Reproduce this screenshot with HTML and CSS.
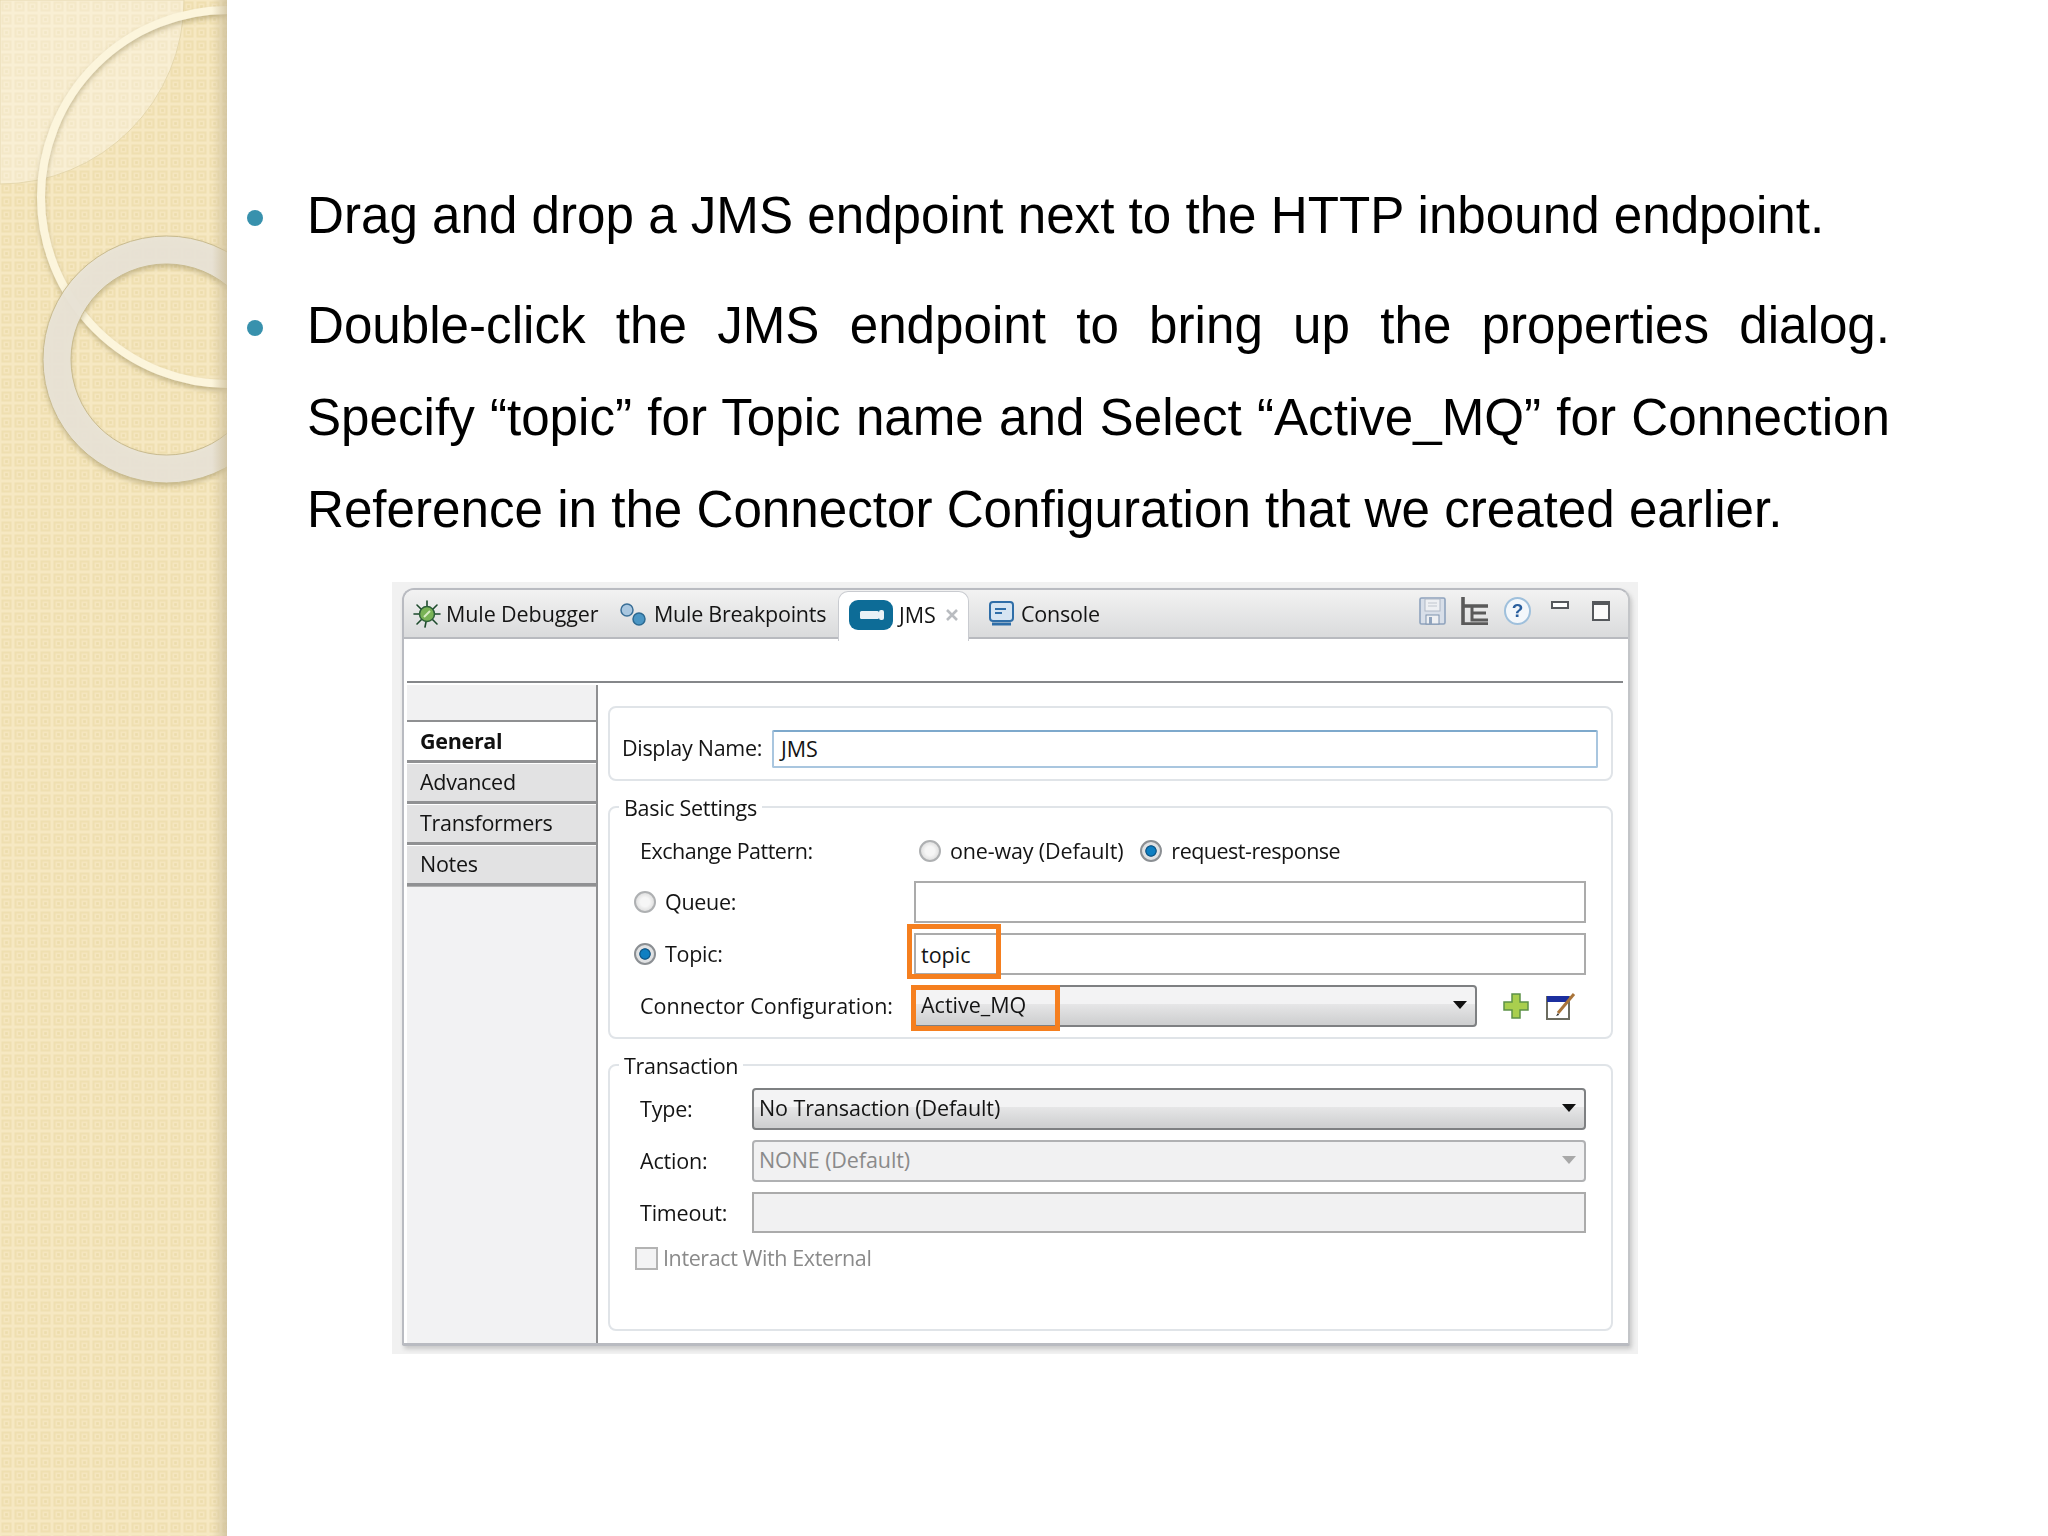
FILE: index.html
```html
<!DOCTYPE html>
<html lang="en">
<head>
<meta charset="utf-8">
<title>JMS endpoint</title>
<link rel="stylesheet" href="styles.css">
</head>
<body>
<div class="slide">
  <aside class="decor">
    <svg width="227" height="1536" viewBox="0 0 227 1536">
      <defs>
        <pattern id="tile" width="13" height="13" patternUnits="userSpaceOnUse">
          <rect width="13" height="13" fill="#f6e8c2"/>
          <rect x="1.5" y="1.5" width="10" height="10" fill="#efdfb0"/>
          <rect x="3.5" y="3.5" width="6" height="6" fill="#f5e6bf"/>
          <rect x="5.2" y="5.2" width="2.6" height="2.6" fill="#ecdcab"/>
        </pattern>
        <linearGradient id="edge" x1="0" x2="1" y1="0" y2="0">
          <stop offset="0" stop-color="#cbbd9a" stop-opacity="0"/>
          <stop offset="1" stop-color="#cbbd9a" stop-opacity=".75"/>
        </linearGradient>
        <filter id="soft" x="-20%" y="-20%" width="140%" height="140%">
          <feDropShadow dx="0" dy="3" stdDeviation="2.5" flood-color="#8a7a4c" flood-opacity=".45"/>
        </filter>
      </defs>
      <rect width="227" height="1536" fill="url(#tile)"/>
      <path d="M0 0H184A184 184 0 0 1 0 184Z" fill="#fff" fill-opacity=".3" stroke="#e6d8ae" stroke-width="1"/>
      <circle cx="228" cy="197" r="187" fill="none" stroke="#fcf5dc" stroke-width="8" filter="url(#soft)"/>
      <circle cx="166.500" cy="359.500" r="109.500" fill="none" stroke="#e9e4d7" stroke-opacity=".93" stroke-width="28" filter="url(#soft)"/>
      <circle cx="166.500" cy="359.500" r="123.500" fill="none" stroke="#c9bb8e" stroke-width="1"/>
      <circle cx="166.500" cy="359.500" r="95.500" fill="none" stroke="#c9bb8e" stroke-width="1"/>
      <rect x="212" width="15" height="1536" fill="url(#edge)"/>
    </svg>
  </aside>

  <main class="content">
    <ul class="points">
      <li class="point"><span class="dot"></span><p class="point-text">Drag and drop a JMS endpoint next to the HTTP inbound endpoint.</p></li>
      <li class="point"><span class="dot"></span><p class="point-text">Double-click the JMS endpoint to bring up the properties dialog. Specify “topic” for Topic name and Select “Active_MQ” for Connection Reference in the Connector Configuration that we created earlier.</p></li>
    </ul>

    <div class="frame">
      <section class="panel">
        <header class="tabbar">
          <div class="tab tab-debug">
            <svg class="ico" width="28" height="30" viewBox="0 0 28 30"><g stroke="#1d4a2c" stroke-width="1.600" stroke-linecap="round"><path d="M14 2v6M4 6l5 5M24 6l-5 5M1 15h6M27 15h-6M4 25l5-5M24 25l-5-5M12 28l1-5"/></g><circle cx="14" cy="15" r="7.500" fill="#79b356" stroke="#2d5f38" stroke-width="1.500"/><path d="M11 18l6-6" stroke="#d8edc4" stroke-width="2"/></svg>
            <span>Mule Debugger</span>
          </div>
          <div class="tab tab-break">
            <svg class="ico" width="30" height="28" viewBox="0 0 30 28"><circle cx="9" cy="10" r="6" fill="#a9c7e0" stroke="#3a6f97" stroke-width="1.500"/><circle cx="21" cy="19" r="6" fill="#4b96c4" stroke="#2d6a92" stroke-width="1.500"/></svg>
            <span>Mule Breakpoints</span>
          </div>
          <div class="tab tab-active">
            <svg class="ico" width="44" height="30" viewBox="0 0 44 30"><rect width="44" height="30" rx="9" fill="#0d6c97"/><rect x="11" y="11" width="19" height="8" rx="1.500" fill="#e8f2f6"/><rect x="30" y="10" width="5" height="10" rx="2" fill="#e8f2f6"/></svg>
            <span>JMS</span>
            <svg class="close" width="14" height="14" viewBox="0 0 14 14"><path d="M2 2l10 10M12 2L2 12" stroke="#b9bcc0" stroke-width="2.600"/></svg>
          </div>
          <div class="tab tab-console">
            <svg class="ico" width="25" height="25" viewBox="0 0 25 25"><rect x="1" y="1" width="23" height="19" rx="3" fill="#d6e5f2" stroke="#2f6ea8" stroke-width="2"/><path d="M6 8h11M6 12h7" stroke="#2f6ea8" stroke-width="2"/><path d="M3 23h19" stroke="#2f6ea8" stroke-width="3"/></svg>
            <span>Console</span>
          </div>
          <div class="tools">
            <svg class="save" width="27" height="28" viewBox="0 0 27 28"><rect x="1" y="1" width="25" height="26" rx="1.500" fill="#d8dfe9" stroke="#8fa3bd" stroke-width="1.600"/><rect x="6" y="2" width="15" height="12" fill="#eef0f3" stroke="#aeb8c6"/><path d="M9 6h9M9 9h9" stroke="#c0c6ce"/><rect x="7" y="18" width="13" height="9" fill="#eef0f3" stroke="#7f93ae"/><rect x="10" y="20" width="3" height="7" fill="#8fa3bd"/></svg>
            <svg width="27" height="28" viewBox="0 0 27 28"><path d="M2 0v27h25M2 9h25" fill="none" stroke="#5a5a5a" stroke-width="3.600"/><path d="M11 9v14h16M11 16h14" fill="none" stroke="#5a5a5a" stroke-width="3"/></svg>
            <span class="help">?</span>
            <span class="min"></span>
            <span class="max"></span>
          </div>
        </header>
        <div class="toolstrip"></div>

        <div class="body">
          <nav class="side">
            <div class="side-blank"></div>
            <div class="side-item side-on">General</div>
            <div class="side-item">Advanced</div>
            <div class="side-item">Transformers</div>
            <div class="side-item">Notes</div>
            <div class="side-fill"></div>
          </nav>

          <div class="forms">
            <div class="group group-name">
              <label class="name-label">Display Name:</label>
              <div class="field field-focus">JMS</div>
            </div>

            <div class="group group-basic">
              <div class="legend">Basic Settings</div>
              <div class="row">
                <div class="cell-label indent tight">Exchange Pattern:</div>
                <div class="choices">
                  <span class="radio"></span><span class="choice-text">one-way (Default)</span>
                  <span class="radio radio-on"></span><span class="choice-text tight">request-response</span>
                </div>
              </div>
              <div class="row row-next">
                <div class="cell-label radio-label"><span class="radio"></span>Queue:</div>
                <div class="field field-wide"></div>
              </div>
              <div class="row row-next">
                <div class="cell-label radio-label"><span class="radio radio-on"></span>Topic:</div>
                <div class="field field-wide">topic<span class="mark mark-topic"></span></div>
              </div>
              <div class="row row-next">
                <div class="cell-label indent loose">Connector Configuration:</div>
                <div class="combo combo-conn">Active_MQ<span class="arrow"></span><span class="mark mark-conn"></span></div>
                <svg class="add" width="26" height="26" viewBox="0 0 26 26"><path d="M9 1h8v8h8v8h-8v8H9v-8H1V9h8Z" fill="#a9cf4e" stroke="#5d9248" stroke-width="1.500"/></svg>
                <svg class="edit" width="30" height="30" viewBox="0 0 30 30"><rect x="1" y="6" width="22" height="22" fill="#fff" stroke="#6c6c60" stroke-width="2"/><rect x="1" y="5" width="22" height="6" fill="#1c2f9f"/><path d="M12 22L28 3" stroke="#a9743a" stroke-width="3"/><path d="M12 22l-2 3 3-1z" fill="#222"/></svg>
              </div>
            </div>

            <div class="group group-trans">
              <div class="legend">Transaction</div>
              <div class="trow">
                <div class="tlabel">Type:</div>
                <div class="combo combo-wide">No Transaction (Default)<span class="arrow"></span></div>
              </div>
              <div class="trow">
                <div class="tlabel">Action:</div>
                <div class="combo combo-wide combo-off">NONE (Default)<span class="arrow arrow-off"></span></div>
              </div>
              <div class="trow">
                <div class="tlabel">Timeout:</div>
                <div class="field field-off"></div>
              </div>
              <div class="check-row"><span class="check"></span>Interact With External</div>
            </div>
          </div>
        </div>
      </section>
    </div>
  </main>
</div>
</body>
</html>
```

FILE: styles.css
```css
* { box-sizing: border-box; }
html, body { margin: 0; padding: 0; background: #fff; }
.slide { display: flex; width: 2048px; height: 1536px; overflow: hidden; background: #fff; }
.decor { flex: 0 0 227px; height: 1536px; }
.decor svg { display: block; }
.content { flex: 1; padding-top: 170px; min-width: 0; }

.points { list-style: none; margin: 0; padding: 0; }
.point { display: flex; margin-bottom: 18px; }
.dot { flex: 0 0 16px; height: 16px; margin: 40px 44px 0 20px; border-radius: 50%; background: #3891ad; }
.point-text { margin: 0; width: 1583px; font: 51.150px/92px "Liberation Sans", Arial, sans-serif; color: #000; text-align: justify; }

.frame { margin: 26px 0 0 165px; width: 1246px; height: 772px; padding: 6px 8px 8px 10px; background: #f1f1f1; }
.panel { height: 758px; background: #fff; border: 2px solid #b9bbc1; border-bottom-width: 3px; border-radius: 12px 12px 2px 2px; border-right-color: #c3c5c8; box-shadow: 2px 3px 4px #c8c8c8; font: 21.500px/30px "Open Sans", "Noto Sans", sans-serif; color: #141414; display: flex; flex-direction: column; overflow: hidden; filter: blur(.35px); }

.tabbar { height: 49px; flex: none; display: flex; align-items: stretch; background: linear-gradient(#f2f2f2, #dadbdc); border-bottom: 2px solid #b8babf; }
.tab { display: flex; align-items: center; white-space: nowrap; letter-spacing: -.1px; }
.tab-debug { padding-left: 9px; width: 214px; gap: 5px; }
.tab-break { width: 220px; gap: 6px; letter-spacing: -.25px; }
.tab-active { width: 131px; padding: 0 0 3px 10px; gap: 6px; height: 50px; background: #fff; border-radius: 10px 10px 0 0; border: 1px solid #c9cbd0; border-bottom: none; margin-top: 1px; }
.close { margin-left: 3px; }
.tab-console { padding-left: 20px; gap: 7px; letter-spacing: -.2px; }
.tools { margin-left: auto; display: flex; align-items: center; padding: 0 18px 6px 0; gap: 16px; }
.save { margin-right: -1px; }
.help { width: 27px; height: 28px; border-radius: 50%; border: 2px solid #9fc0dc; background: #f3f7fb; color: #2a5f9e; font: bold 19px/24px "Liberation Sans", sans-serif; text-align: center; }
.min { width: 18px; height: 8px; margin: 0 7px 12px 4px; border: 2px solid #55585c; background: #fff; }
.max { width: 18px; height: 20px; border: 2px solid #55585c; border-top-width: 4px; background: #fbfbfb; }

.toolstrip { height: 44px; flex: none; margin: 0 5px 2px 3px; border-bottom: 2px solid #85878a; }
.body { flex: 1; display: flex; padding: 0 0 0 3px; min-height: 0; }

.side { flex: 0 0 191px; display: flex; flex-direction: column; border-right: 2px solid #8f9092; }
.side-blank { height: 37px; background: #f1f1f2; border-bottom: 2px solid #8f9092; flex: none; }
.side-item { flex: none; height: 41px; padding: 0 13px; line-height: 35px; background: #e2e2e3; border-bottom: 3px solid #909193; border-top: 1px solid #fff; letter-spacing: -.3px; }
.side-on { background: #fff; font-weight: 700; color: #111; }
.side-fill { flex: 1; background: #f2f2f3; border-top: 1px solid #b0b0b0; }

.forms { flex: none; width: 1005px; margin-left: 10px; padding-top: 21px; }
.group { border: 2px solid #e0e4e8; border-radius: 8px; }
.group-name { height: 75px; display: flex; align-items: flex-start; padding: 22px 0 0 12px; margin-bottom: 25px; }
.name-label { width: 150px; flex: none; letter-spacing: -.3px; padding-top: 3px; }
.group-basic { height: 233px; padding-top: 22px; margin-bottom: 25px; }
.group-trans { height: 267px; padding-top: 22px; }
.legend { width: fit-content; height: 30px; margin: -37px 0 7px 9px; padding: 0 5px; background: #fff; letter-spacing: -.3px; }

.field { height: 42px; border: 2px solid #ababab; background: #fff; padding: 0 5px; line-height: 40px; position: relative; }
.field-focus { width: 826px; height: 38px; line-height: 34px; padding: 0 7px; border-color: #a9c6df; border-top-color: #7ea9cc; border-radius: 2px; }
.field-wide { width: 672px; }
.field-off { width: 834px; height: 41px; background: #f1f1f2; }

.row { display: flex; align-items: center; height: 42px; }
.row-next { margin-top: 9px; }
.row-next + .row-next { margin-top: 10px; }
.cell-label { flex: 0 0 304px; white-space: nowrap; letter-spacing: -.3px; }
.indent { padding-left: 30px; }
.radio-label { display: flex; align-items: center; gap: 9px; padding-left: 24px; }
.choices { display: flex; align-items: center; padding-left: 5px; letter-spacing: -.15px; }
.choice-text { margin: 0 17px 0 9px; }
.tight { letter-spacing: -.5px; }
.loose { letter-spacing: 0; }

.radio { flex: none; width: 22px; height: 22px; border-radius: 50%; border: 2px solid #aeb0b2; background: radial-gradient(circle, #f6f6f6 35%, #cfcfcf 100%); }
.radio-on { border-color: #8b8f93; background: radial-gradient(circle, #0f7fc2 0 30%, #0b4f7e 42%, #e2e4e6 48%, #d8d8d8 100%); }

.combo { position: relative; height: 42px; padding: 0 5px; line-height: 36px; border: 2px solid #7e8082; border-radius: 4px; background: linear-gradient(#f3f3f4 0 45%, #e6e6e7 45%, #cfd0d1 95%); }
.combo-conn { width: 564px; margin-left: -1px; padding-left: 6px; }
.combo-wide { width: 834px; letter-spacing: -.1px; }
.combo-off { background: #f1f1f2; color: #8a8a8a; border-color: #b0b1b3; }
.arrow { position: absolute; right: 8px; top: 14px; width: 0; height: 0; border: 7px solid transparent; border-top: 8px solid #111; border-bottom: none; }
.arrow-off { border-top-color: #a8a8a8; }
.add { margin-left: 26px; flex: none; }
.edit { margin-left: 17px; flex: none; }

.mark { position: absolute; border: 5px solid #f57f1f; pointer-events: none; }
.mark-topic { left: -9px; top: -11px; width: 94px; height: 55px; }
.mark-conn { left: -4px; top: -2px; width: 149px; height: 46px; }

.trow { display: flex; align-items: center; height: 41px; margin-bottom: 11px; }
.tlabel { flex: 0 0 142px; padding-left: 30px; letter-spacing: -.2px; }
.check-row { display: flex; align-items: center; gap: 5px; margin-top: 13px; padding-left: 25px; height: 24px; color: #8a8a8a; letter-spacing: -.4px; }
.check { width: 23px; height: 23px; flex: none; border: 2px solid #b3b3b3; background: #f3f3f4; }
```
